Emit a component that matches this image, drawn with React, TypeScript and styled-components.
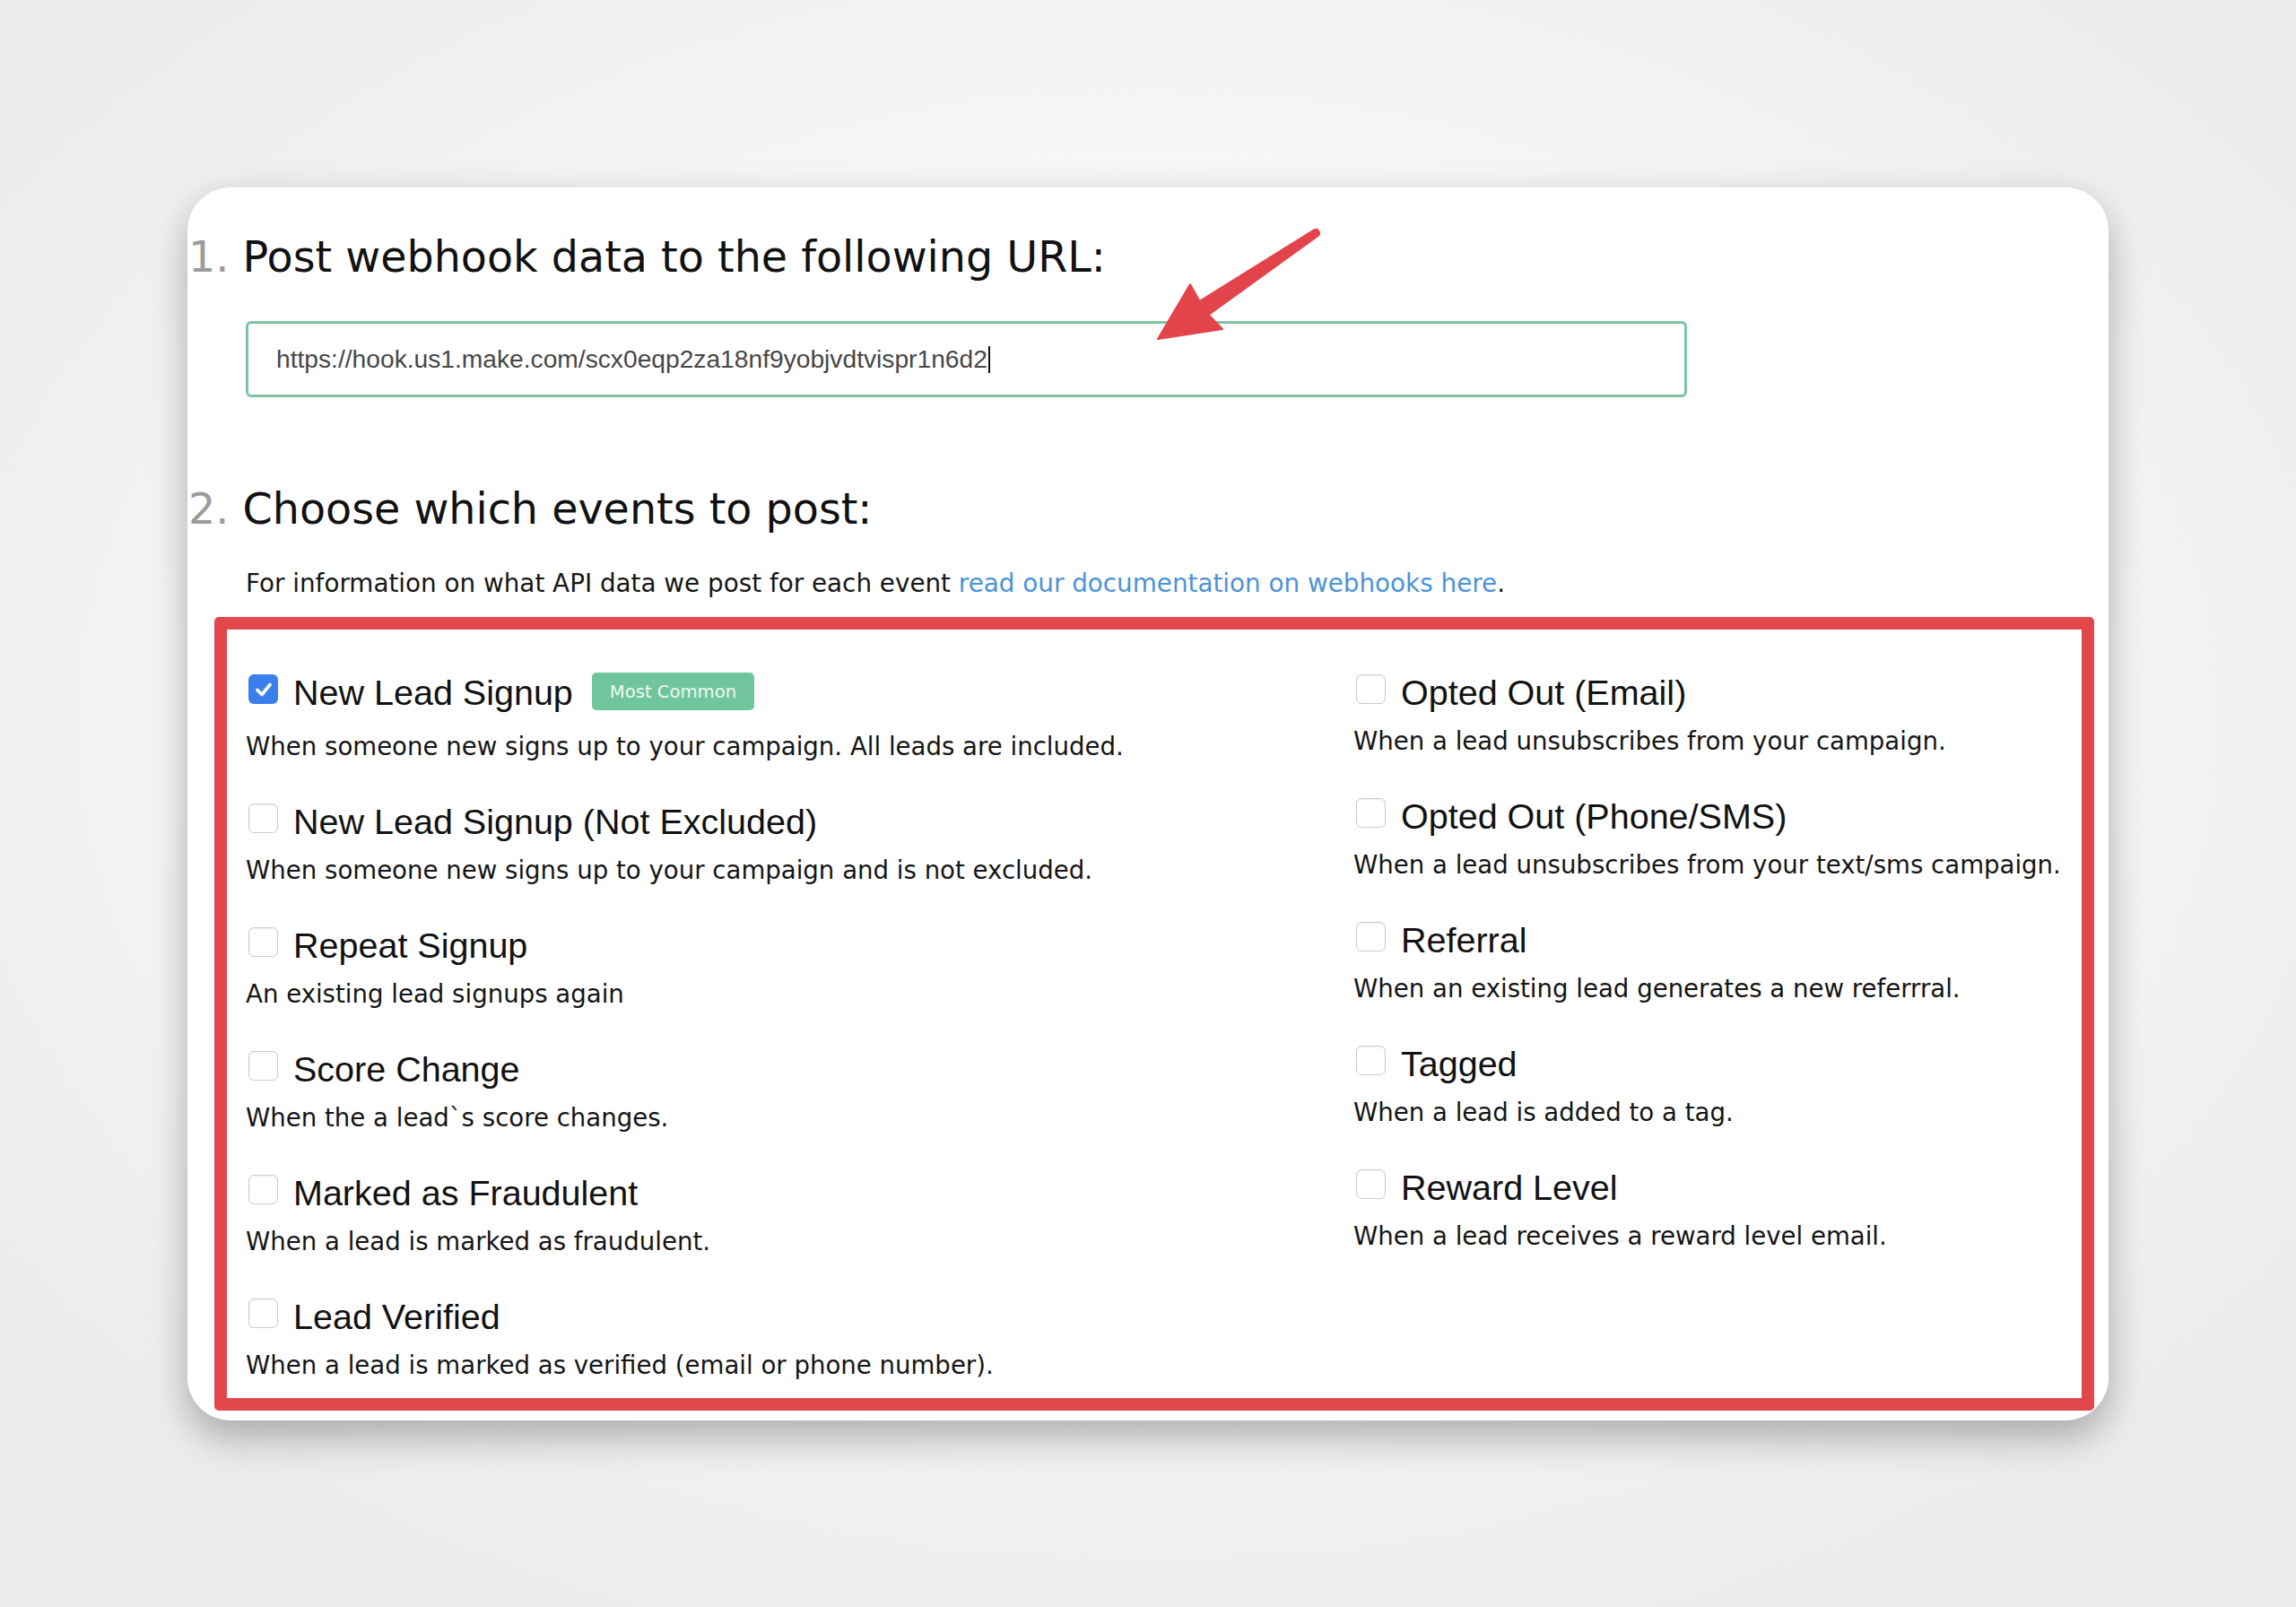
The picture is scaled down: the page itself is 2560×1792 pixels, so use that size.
import styled, { createGlobalStyle } from 'styled-components';

// GLOBAL

const GlobalStyle = createGlobalStyle`
    html, body {
        margin: 0;
        padding: 0;
    }
    body {
        width: 2560px;
        height: 1792px;
        overflow: hidden;
        background: radial-gradient(ellipse 60% 60% at 50% 45%, #fdfdfd 0%, #f6f6f6 60%, #ececec 100%);
        font-family: "DejaVu Sans", Verdana, sans-serif;
        color: #141414;
    }
`;

// STYLE

const Card = styled.div`
    position: relative;
    box-sizing: border-box;
    margin: 209px 0 0 209px;
    width: 2142px;
    height: 1375px;
    padding-top: 50px;
    background: #ffffff;
    border-radius: 48px;
    box-shadow: 0 22px 40px rgba(0, 0, 0, 0.24), 0 0 40px rgba(0, 0, 0, 0.06);
    overflow: hidden;
`;

const Heading = styled.h2<{ $gap: number }>`
    margin: ${p => p.$gap}px 0 0 1px;
    font-family: "DejaVu Sans", Verdana, sans-serif;
    font-weight: normal;
    font-size: 47.6px;
    line-height: 56px;
    color: #111111;
    white-space: nowrap;

    span {
        color: #9c9c9c;
    }
`;

const UrlField = styled.div`
    box-sizing: border-box;
    display: flex;
    align-items: center;
    margin: 43px 0 0 65px;
    width: 1607px;
    height: 85px;
    padding-left: 31px;
    border: 3px solid #7cc4a3;
    border-radius: 6px;
    font-family: "Liberation Sans", Arial, sans-serif;
    font-size: 28.2px;
    color: #474747;
`;

const Caret = styled.span`
    display: inline-block;
    width: 2px;
    height: 30px;
    margin-left: 1px;
    background: #111111;
`;

const Info = styled.p`
    margin: 35px 0 0 65px;
    font-size: 27.8px;
    line-height: 40px;
    color: #161616;
    white-space: nowrap;

    a {
        color: #4b93d8;
        text-decoration: none;
    }
`;

const EventBox = styled.div`
    box-sizing: border-box;
    display: grid;
    grid-template-columns: 1235px 1fr;
    margin: 17px 0 0 30px;
    width: 2096px;
    height: 885px;
    padding: 48px 0 0 21px;
    border: 14px solid #e2474c;
    border-radius: 5px;
`;

const Column = styled.div`
    display: flex;
    flex-direction: column;
    gap: 43px;
`;

const TitleRow = styled.div`
    display: flex;
    align-items: flex-start;
    min-height: 44px;
`;

const Box = styled.span<{ $checked?: boolean }>`
    box-sizing: border-box;
    flex: none;
    width: 33px;
    height: 33px;
    margin: 2px 17px 0 3px;
    border-radius: 6px;
    display: flex;
    align-items: center;
    justify-content: center;
    background: ${p => (p.$checked ? '#3b7fec' : '#ffffff')};
    border: ${p => (p.$checked ? 'none' : '1.5px solid #cdcdcd')};
    box-shadow: ${p => (p.$checked ? 'none' : 'inset 0 1px 2px rgba(0,0,0,0.07)')};
`;

const Title = styled.span`
    font-family: "Liberation Sans", Arial, sans-serif;
    font-size: 39.5px;
    line-height: 44px;
    color: #121212;
    white-space: nowrap;
`;

const Badge = styled.span`
    margin: 0 0 8px 21px;
    height: 42px;
    padding: 0 20px;
    display: flex;
    align-items: center;
    border-radius: 5px;
    background: #71c59d;
    color: #eef9f3;
    font-size: 19.6px;
    white-space: nowrap;
`;

const Desc = styled.div`
    margin-top: 15px;
    font-size: 27.6px;
    line-height: 36px;
    color: #151515;
    white-space: nowrap;
`;

const ArrowMark = styled.svg`
    position: absolute;
    left: 1061px;
    top: 31px;
    width: 220px;
    height: 160px;
`;

// DATA

type EventItem = { title: string; desc: string; checked?: boolean; badge?: string };

const leftEvents: EventItem[] = [
    { title: 'New Lead Signup', desc: 'When someone new signs up to your campaign. All leads are included.', checked: true, badge: 'Most Common' },
    { title: 'New Lead Signup (Not Excluded)', desc: 'When someone new signs up to your campaign and is not excluded.' },
    { title: 'Repeat Signup', desc: 'An existing lead signups again' },
    { title: 'Score Change', desc: 'When the a lead`s score changes.' },
    { title: 'Marked as Fraudulent', desc: 'When a lead is marked as fraudulent.' },
    { title: 'Lead Verified', desc: 'When a lead is marked as verified (email or phone number).' },
];

const rightEvents: EventItem[] = [
    { title: 'Opted Out (Email)', desc: 'When a lead unsubscribes from your campaign.' },
    { title: 'Opted Out (Phone/SMS)', desc: 'When a lead unsubscribes from your text/sms campaign.' },
    { title: 'Referral', desc: 'When an existing lead generates a new referrral.' },
    { title: 'Tagged', desc: 'When a lead is added to a tag.' },
    { title: 'Reward Level', desc: 'When a lead receives a reward level email.' },
];

const Event = ({ item }: { item: EventItem }) => (
    <div>
        <TitleRow>
            <Box $checked={item.checked}>
                {item.checked && (
                    <svg width="22" height="22" viewBox="0 0 22 22">
                        <polyline points="4,11.5 9,16.5 18,5.5" fill="none" stroke="#fff" strokeWidth="3.6" strokeLinecap="round" strokeLinejoin="round" />
                    </svg>
                )}
            </Box>
            <Title>{item.title}</Title>
            {item.badge && <Badge>{item.badge}</Badge>}
        </TitleRow>
        <Desc>{item.desc}</Desc>
    </div>
);

const App = () => (
    <>
        <GlobalStyle />
        <Card>
            <Heading $gap={0}><span>1.</span> Post webhook data to the following URL:</Heading>
            <UrlField>
                https://hook.us1.make.com/scx0eqp2za18nf9yobjvdtvispr1n6d2
                <Caret />
            </UrlField>

            <Heading $gap={97}><span>2.</span> Choose which events to post:</Heading>
            <Info>
                For information on what API data we post for each event <a href="#">read our documentation on webhooks here</a>.
            </Info>

            <EventBox>
                <Column>
                    {leftEvents.map(e => <Event key={e.title} item={e} />)}
                </Column>
                <Column>
                    {rightEvents.map(e => <Event key={e.title} item={e} />)}
                </Column>
            </EventBox>

            <ArrowMark viewBox="0 0 220 160">
                <path
                    d="M21,138 L57,77 L67.6,95.9 L195.2,16.4 A4,4 0 0 1 199.6,23 L77.6,110.9 L93,127 Z"
                    fill="#e3444b"
                    stroke="#e3444b"
                    strokeWidth="2"
                    strokeLinejoin="round"
                />
            </ArrowMark>
        </Card>
    </>
);

export default App;
